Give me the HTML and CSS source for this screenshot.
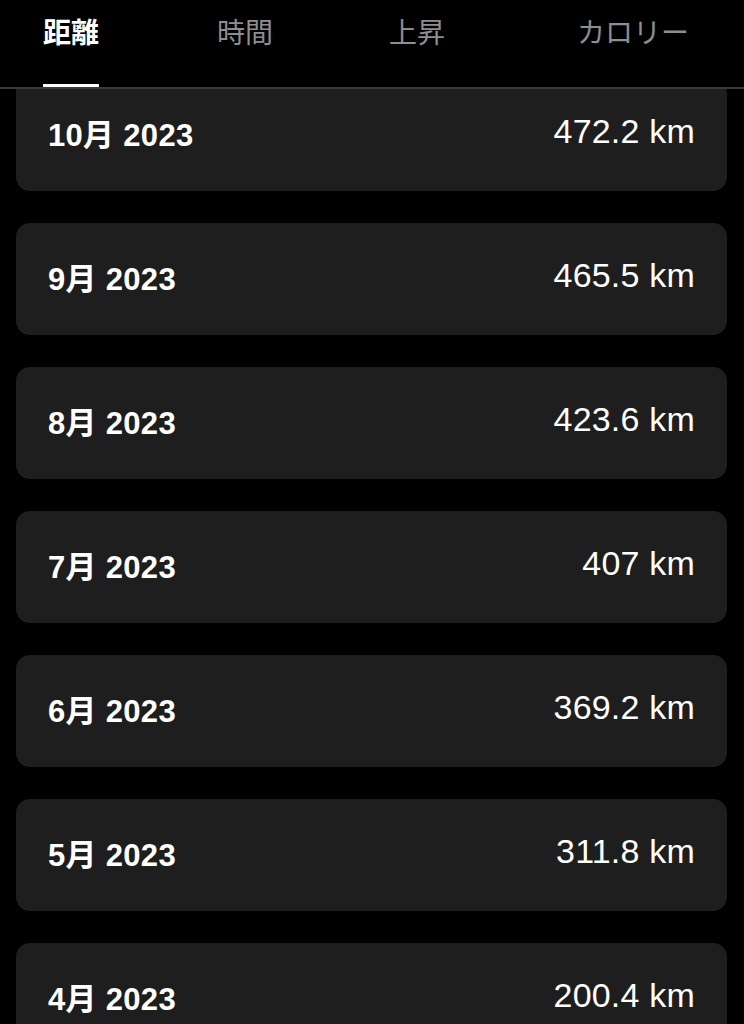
FILE: index.html
```html
<!DOCTYPE html>
<html lang="ja">
<head>
<meta charset="utf-8">
<link rel="stylesheet" href="styles.css">
</head>
<body>
<nav class="tabs">
  <div class="tab active"><span class="tab-label">距離</span><span class="tab-bar"></span></div>
  <div class="tab"><span class="tab-label">時間</span><span class="tab-bar"></span></div>
  <div class="tab"><span class="tab-label">上昇</span><span class="tab-bar"></span></div>
  <div class="tab"><span class="tab-label">カロリー</span><span class="tab-bar"></span></div>
</nav>
<main class="list">
  <div class="card"><span class="month">10月 2023</span><span class="value">472.2 km</span></div>
  <div class="card"><span class="month">9月 2023</span><span class="value">465.5 km</span></div>
  <div class="card"><span class="month">8月 2023</span><span class="value">423.6 km</span></div>
  <div class="card"><span class="month">7月 2023</span><span class="value">407 km</span></div>
  <div class="card"><span class="month">6月 2023</span><span class="value">369.2 km</span></div>
  <div class="card"><span class="month">5月 2023</span><span class="value">311.8 km</span></div>
  <div class="card"><span class="month">4月 2023</span><span class="value">200.4 km</span></div>
</main>
</body>
</html>
```
FILE: styles.css
```css
html, body {
  margin: 0;
  padding: 0;
  background: #000;
  height: 1024px;
  overflow: hidden;
  font-family: "Liberation Sans", "Noto Sans CJK JP", sans-serif;
  color: #fff;
}

.tabs {
  position: relative;
  z-index: 1;
  background: #000;
  display: grid;
  grid-template-columns: 174px 172px 188px auto;
  justify-items: start;
  height: 89px;
  box-sizing: border-box;
  padding: 0 0 0 43px;
  border-bottom: 2px solid #3a3a3a;
}

.tab {
  display: flex;
  flex-direction: column;
  justify-content: space-between;
  padding-top: 16px;
}

.tab-label {
  font-size: 28px;
  line-height: 36px;
  color: #8e8e8e;
}

.tab.active .tab-label {
  color: #fff;
  font-weight: bold;
}

.tab-bar {
  height: 3px;
  background: transparent;
}

.tab.active .tab-bar {
  background: #fff;
}

.list {
  margin-top: -10px;
  padding: 0 17px 0 16px;
  display: flex;
  flex-direction: column;
  gap: 32px;
}

.card {
  height: 112px;
  box-sizing: border-box;
  background: #1e1e1e;
  border-radius: 14px;
  padding: 34px 32px 0 32px;
  display: flex;
  justify-content: space-between;
  align-items: flex-start;
  flex-shrink: 0;
}

.month {
  margin-top: 5px;
  font-size: 31px;
  line-height: 36px;
  font-weight: bold;
  letter-spacing: 0.3px;
}

.value {
  font-size: 34px;
  line-height: 36px;
  letter-spacing: 0.2px;
}
```
